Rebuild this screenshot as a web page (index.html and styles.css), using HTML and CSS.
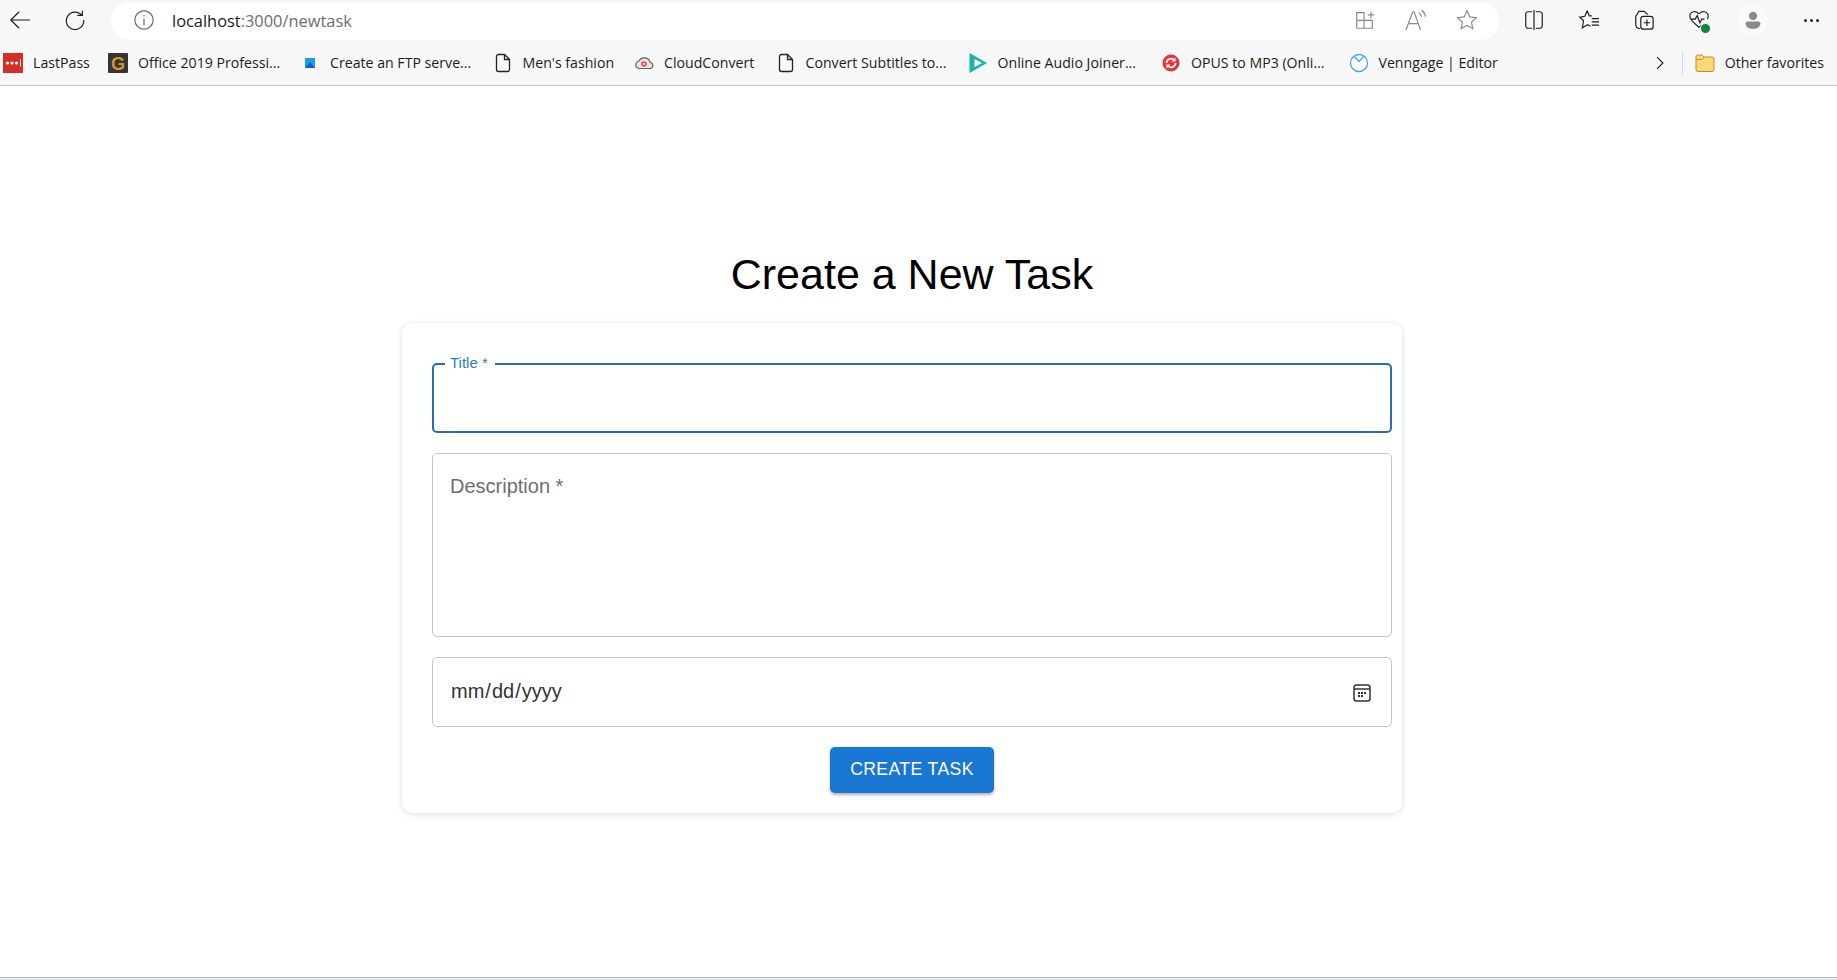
FILE: index.html
```html
<!DOCTYPE html>
<html lang="en">
<head>
<meta charset="utf-8">
<title>Create a New Task</title>
<link rel="stylesheet" href="styles.css">
</head>
<body>
<header class="chrome">
  <div class="toolbar">
    <div class="nav">
      <svg class="ico back" viewBox="0 0 24 24"><path d="M23 12H2M11 3l-9 9 9 9"/></svg>
      <svg class="ico reload" viewBox="0 0 24 24"><path d="M19.500 7A9.500 9.500 0 1 0 21.500 12M20 1.500V7h-5.500"/></svg>
    </div>
    <div class="address">
      <svg class="ico info" viewBox="0 0 24 24"><circle cx="12" cy="12" r="10"/><path d="M12 10.500V18M12 6.500v1.800"/></svg>
      <span class="url"><span class="host">localhost</span>:3000/newtask</span>
      <div class="addr-actions">
        <svg class="ico dim" viewBox="0 0 24 24"><path d="M3 4h8v17H3zM3 12.500h17V21H11M15 6.500h7M18.500 3v7"/></svg>
        <svg class="ico dim" viewBox="0 0 24 24"><path d="M1 23 8.500 3h1.500l7 20M3.500 16h11.500M15 4c1.800 1 2.800 2.600 3 4.500M18 1.500c2.600 1.600 4 4 4.300 7"/></svg>
        <svg class="ico dim" viewBox="0 0 24 24"><path d="m12 2 3 6.600 7.200.9-5.300 4.900 1.400 7.100L12 17.900l-6.300 3.600 1.400-7.100-5.300-4.900L9 8.600z"/></svg>
      </div>
    </div>
    <div class="tools">
      <svg class="ico dark" viewBox="0 0 24 24"><path d="M10 3H5.500A2.500 2.500 0 0 0 3 5.500v13A2.500 2.500 0 0 0 5.500 21H10M14 3h4.500A2.500 2.500 0 0 1 21 5.500v13a2.500 2.500 0 0 1-2.500 2.500H14M12 1v22"/></svg>
      <svg class="ico dark" viewBox="0 0 24 24"><path d="m10 2 2.300 5.600H15M7.500 8 2 8.800l4 4-1.300 7.700 5.800-3.300 3 1.600M7.500 8 10 2M15 10.500h8M15 14h8M15 17.500h8"/></svg>
      <svg class="ico dark" viewBox="0 0 24 24"><path d="M7.500 21.500A5 5 0 0 1 3 16.500V8l3.500-5.500H12l4 3.500"/><rect x="8.500" y="8" width="13.500" height="14" rx="3"/><path d="M15.200 11.500v7M11.700 15h7"/></svg>
      <span class="health">
        <svg class="ico dark" viewBox="0 0 24 24"><path d="M12 5.500C9 1 2 2.500 2 8c0 3 2.500 6 10 12 1-.8 2-1.600 2.800-2.400M12 5.500c3-4.500 10-3 10 2.500 0 1-.3 2-.8 3M2.500 11H8l2-4 3 8 2-4h3"/></svg>
        <span class="ok"></span>
      </span>
      <span class="avatar"><svg class="person" viewBox="0 0 24 24"><circle cx="12" cy="7.500" r="4.500"/><path d="M4 15.500c0-1 1-2 2-2h12c1 0 2 1 2 2 0 4-3 6-8 6s-8-2-8-6z"/></svg></span>
      <span class="more"><i></i><i></i><i></i></span>
    </div>
  </div>
  <nav class="bookmarks">
    <a class="bm w-lastpass"><svg class="fav" viewBox="0 0 20 20"><rect width="20" height="20" fill="#d32f2a"/><circle cx="4.500" cy="10" r="1.600" fill="#fff"/><circle cx="9" cy="10" r="1.600" fill="#fff"/><circle cx="13.500" cy="10" r="1.600" fill="#fff"/><path d="M17.500 6.500v7" stroke="#fff"/></svg>LastPass</a>
    <a class="bm w-office"><svg class="fav" viewBox="0 0 20 20"><rect width="20" height="20" rx="1" fill="#353535"/><text class="g" x="10" y="16.500" text-anchor="middle">G</text></svg>Office 2019 Professi...</a>
    <a class="bm w-ftp"><svg class="fav" viewBox="0 0 20 20"><path d="M5 5h10v10H5z" fill="#1e9cf0"/><path d="M5 15 10 9l5 6z" fill="#0a63c9"/></svg>Create an FTP serve...</a>
    <a class="bm w-mens"><svg class="fav doc" viewBox="0 0 20 20"><path d="M3.500 3.500a2 2 0 0 1 2-2h6l5 5v10a2 2 0 0 1-2 2h-9a2 2 0 0 1-2-2zM11.500 1.500v5h5"/></svg>Men's fashion</a>
    <a class="bm w-cloud"><svg class="fav" viewBox="0 0 20 20"><path d="M5 15.500h10.500a3 3 0 0 0 .6-6A6 6 0 0 0 5 8a3.800 3.800 0 0 0 0 7.500z" fill="#e8e4e4" stroke="#6b6666" stroke-width="1.200"/><circle cx="10" cy="11" r="2.800" fill="#d9534f"/><circle cx="10" cy="11" r="1" fill="#fff"/></svg>CloudConvert</a>
    <a class="bm w-subs"><svg class="fav doc" viewBox="0 0 20 20"><path d="M3.500 3.500a2 2 0 0 1 2-2h6l5 5v10a2 2 0 0 1-2 2h-9a2 2 0 0 1-2-2zM11.500 1.500v5h5"/></svg>Convert Subtitles to...</a>
    <a class="bm w-audio"><svg class="fav" viewBox="0 0 20 20"><path d="M1.500 0 19 10 1.500 20z" fill="#19b5a5"/><path d="M6.500 6 14 10l-7.500 4z" fill="#fff"/></svg>Online Audio Joiner...</a>
    <a class="bm w-opus"><svg class="fav" viewBox="0 0 20 20"><circle cx="10" cy="10" r="8.500" fill="#e8333a"/><path d="M5.500 10a4.500 4.500 0 0 1 7.500-3.200M14.500 10a4.500 4.500 0 0 1-7.500 3.200" fill="none" stroke="#fff" stroke-width="1.800"/><path d="m14.500 4.500v4h-4zM5.500 15.500v-4h4z" fill="#fff"/></svg>OPUS to MP3 (Onli...</a>
    <a class="bm w-venn"><svg class="fav" viewBox="0 0 20 20"><circle cx="10" cy="10" r="8.500" fill="#fff" stroke="#4ba3e3" stroke-width="1.300"/><path d="m5.500 3.500 4.500 5 4.500-5" fill="none" stroke="#4ba3e3" stroke-width="1.300"/></svg>Venngage | Editor</a>
    <span class="bm-spacer"></span>
    <svg class="ico chevron" viewBox="0 0 24 24"><path d="m7 2 10 10L7 22"/></svg>
    <span class="bm-sep"></span>
    <a class="bm"><svg class="fav" viewBox="0 0 20 20"><path d="M1 4a2 2 0 0 1 2-2h4l2 2h8a2 2 0 0 1 2 2v10.500a2 2 0 0 1-2 2H3a2 2 0 0 1-2-2z" fill="#fcd874" stroke="#b98f2c"/><path d="M1 6.500h6l2.500-2.500" fill="none" stroke="#b98f2c"/></svg>Other favorites</a>
  </nav>
</header>

<main class="page">
  <div class="column">
    <h1 class="heading">Create a New Task</h1>
    <form class="card">
      <div class="field field-title focused">
        <label class="label-float" for="title">Title *</label>
        <fieldset class="outline notched" aria-hidden="true"><legend><span>Title *</span></legend></fieldset>
        <input id="title" class="control" type="text">
      </div>
      <div class="field field-desc">
        <label class="label-rest" for="desc">Description *</label>
        <fieldset class="outline" aria-hidden="true"></fieldset>
        <textarea id="desc" class="control"></textarea>
      </div>
      <div class="field field-date">
        <fieldset class="outline" aria-hidden="true"></fieldset>
        <input class="control date" type="date">
        <svg class="calendar" viewBox="0 0 18 18"><rect x="1" y="1" width="16" height="16" rx="2.500"/><path d="M1 5h16"/><path class="dots" d="M5 8h2v2H5zM8 8h2v2H8zM11 8h2v2h-2zM5 11h2v2H5zM8 11h2v2H8z"/></svg>
      </div>
      <div class="actions"><button class="submit" type="button">CREATE TASK</button></div>
    </form>
  </div>
</main>
<div class="taskbar-edge"></div>
</body>
</html>
```
FILE: styles.css
```css
* { box-sizing: border-box; }
html, body { margin: 0; height: 100%; }
body {
  display: flex;
  flex-direction: column;
  height: 980px;
  overflow: hidden;
  background: #fff;
  font-family: "Liberation Sans", Arial, sans-serif;
  color: #000;
}

/* browser chrome */
.chrome {
  background: #f7f7f7;
  border-bottom: 1px solid #c9c9c9;
  font-family: "Open Sans", "Noto Sans", sans-serif;
}
.toolbar {
  display: flex;
  align-items: center;
  height: 40px;
  padding-top: 2px;
}
.ico { width: 22px; height: 22px; fill: none; stroke: #1f1f1f; stroke-width: 1.300; flex: none; }
.nav { display: flex; width: 111px; padding-left: 9px; gap: 33px; margin-bottom: 2px; }
.address {
  display: flex;
  align-items: center;
  width: 1388px;
  height: 38px;
  border-radius: 19px;
  background: #fff;
  padding: 0 0 2px 22px;
}
.info { stroke: #6b6b6b; }
.url { margin-left: 17px; font-size: 16.400px; color: #6e6e6e; }
.host { color: #1c1c1c; }
.addr-actions { display: flex; margin-left: auto; gap: 29px; padding-right: 21px; }
.dim { stroke: #8a8a8a; }
.tools { display: flex; align-items: center; padding-left: 24px; gap: 33px; margin-bottom: 2px; }
.health { position: relative; display: flex; }
.ok {
  position: absolute;
  right: -1px;
  bottom: -3px;
  width: 11px;
  height: 11px;
  border-radius: 50%;
  background: #12833a;
  border: 1px solid #fff;
}
.avatar {
  display: flex;
  align-items: center;
  justify-content: center;
  width: 30px;
  height: 30px;
  border-radius: 50%;
  background: #fbfbfb;
  margin: 0 -3px 0 -5px;
}
.person { width: 22px; height: 22px; fill: #8a8a8a; }
.more { display: flex; gap: 3px; margin-left: 6px; }
.more i { width: 3px; height: 3px; border-radius: 50%; background: #222; }

.bookmarks {
  display: flex;
  align-items: center;
  height: 45px;
  padding: 0 13px 0 3px;
  font-size: 14.150px;
  color: #1c1c1c;
  white-space: nowrap;
}
.bm { display: flex; align-items: center; gap: 10px; }
.fav { width: 20px; height: 20px; flex: none; }
.doc { fill: none; stroke: #222; stroke-width: 1.300; }
.g { font-family: "Liberation Sans", sans-serif; font-weight: 700; font-size: 18px; fill: #d09a23; }
.w-lastpass { width: 105px; }
.w-office { width: 192px; }
.w-ftp { width: 192.500px; }
.w-mens { width: 141.500px; }
.w-cloud { width: 141.500px; }
.w-subs { width: 192px; }
.w-audio { width: 193.500px; }
.w-opus { width: 187.500px; }
.bm-spacer { flex: 1; }
.chevron { width: 14px; height: 14px; stroke-width: 2; }
.bm-sep { width: 1px; height: 22px; background: #d8d8d8; margin: 0 12px 0 15px; }

/* page */
.page {
  flex: 1;
  display: flex;
  justify-content: center;
  padding-right: 13px;
}
.column { width: 960px; padding-top: 160px; }
.heading {
  margin: 0 0 21px;
  text-align: center;
  font-size: 43px;
  line-height: 56px;
  font-weight: 400;
}
.card {
  margin: 0 -10px 0 -30px;
  padding: 40px 10px 20px 30px;
  display: flex;
  flex-direction: column;
  gap: 20px;
  background: #fff;
  border-radius: 10px;
  box-shadow: 0 2px 7px rgba(0, 0, 0, .09), 0 0 5px rgba(0, 0, 0, .05);
}
.field { position: relative; display: flex; }
.field-title { height: 70px; }
.field-desc { height: 184px; }
.field-date { height: 70px; }
.outline {
  position: absolute;
  inset: 0;
  margin: 0;
  padding: 0 12px;
  border: 1px solid #c4c4c4;
  border-radius: 5px;
  pointer-events: none;
}
.notched { inset: -5px 0 0; }
.outline legend { padding: 0 6px; height: 11px; font-size: 15px; visibility: hidden; line-height: 11px; white-space: nowrap; }
.focused .outline { border: 2px solid #2a6db0; padding: 0 11px; }
.control {
  flex: 1;
  width: 100%;
  border: 0;
  outline: 0;
  background: transparent;
  padding: 16px 18px;
  font: 20px "Liberation Sans", Arial, sans-serif;
  color: #333;
  resize: none;
}
.label-float, .label-rest { position: absolute; left: 18px; }
.label-float { top: -9px; font-size: 15px; line-height: 17px; color: #2f7dbd; }
.label-rest { top: 21px; font-size: 20px; line-height: 24px; color: #6e6e6e; }
.date { padding: 15px 14px 17px 18px; }
.date::-webkit-calendar-picker-indicator { opacity: 0; }
.calendar {
  position: absolute;
  top: 27px;
  right: 21px;
  width: 18px;
  height: 18px;
  fill: none;
  stroke: #333;
  stroke-width: 1.500;
  pointer-events: none;
}
.calendar .dots { fill: #333; stroke: none; }
.actions { display: flex; justify-content: center; }
.submit {
  width: 164px;
  height: 46px;
  border: 0;
  padding: 0 0 2px;
  border-radius: 5px;
  background: #1976d2;
  color: #fff;
  font: 17.600px "Liberation Sans", Arial, sans-serif;
  letter-spacing: .4px;
  box-shadow: 0 2px 3px rgba(0, 0, 0, .3);
}
.taskbar-edge { height: 3px; border-top: 1px solid #b9bcc0; background: #e4e9f1; }
```
